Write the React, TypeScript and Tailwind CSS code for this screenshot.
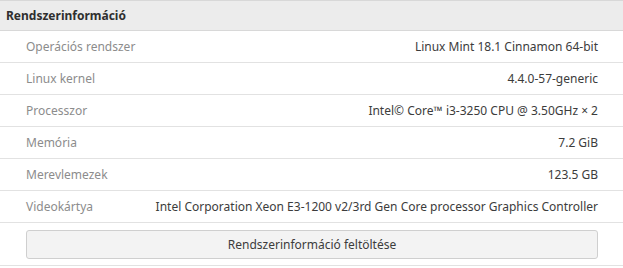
const rows = [
  { label: "Operációs rendszer", value: "Linux Mint 18.1 Cinnamon 64-bit" },
  { label: "Linux kernel", value: "4.4.0-57-generic" },
  { label: "Processzor", value: "Intel© Core™ i3-3250 CPU @ 3.50GHz × 2" },
  { label: "Memória", value: "7.2 GiB" },
  { label: "Merevlemezek", value: "123.5 GB" },
  {
    label: "Videokártya",
    value: "Intel Corporation Xeon E3-1200 v2/3rd Gen Core processor Graphics Controller",
  },
];

export default function App() {
  return (
    <div className="h-[268px] w-[623px] bg-white font-['Noto_Sans',sans-serif] text-[12px]">
      <div className="border-y border-[#d8d8d8] bg-[#ececec] h-[31px] flex items-center px-[6px]">
        <span className="font-bold text-[#2f2f2f]">Rendszerinformáció</span>
      </div>
      {rows.map((row) => (
        <div
          key={row.label}
          className="flex h-[32px] items-center justify-between border-b border-[#e2e2e2] pl-[26px] pr-[25px]"
        >
          <span className="text-[#8c8c8c]">{row.label}</span>
          <span className="text-[#3c3c3c]">{row.value}</span>
        </div>
      ))}
      <div className="border-b border-[#e2e2e2] pl-[26px] pr-[25px] pt-[7px] pb-[6px]">
        <button
          type="button"
          className="flex h-[29px] w-full items-center justify-center rounded-[3px] border border-[#cfcfcf] bg-[#f3f3f3] text-[#3c3c3c]"
        >
          Rendszerinformáció feltöltése
        </button>
      </div>
    </div>
  );
}
